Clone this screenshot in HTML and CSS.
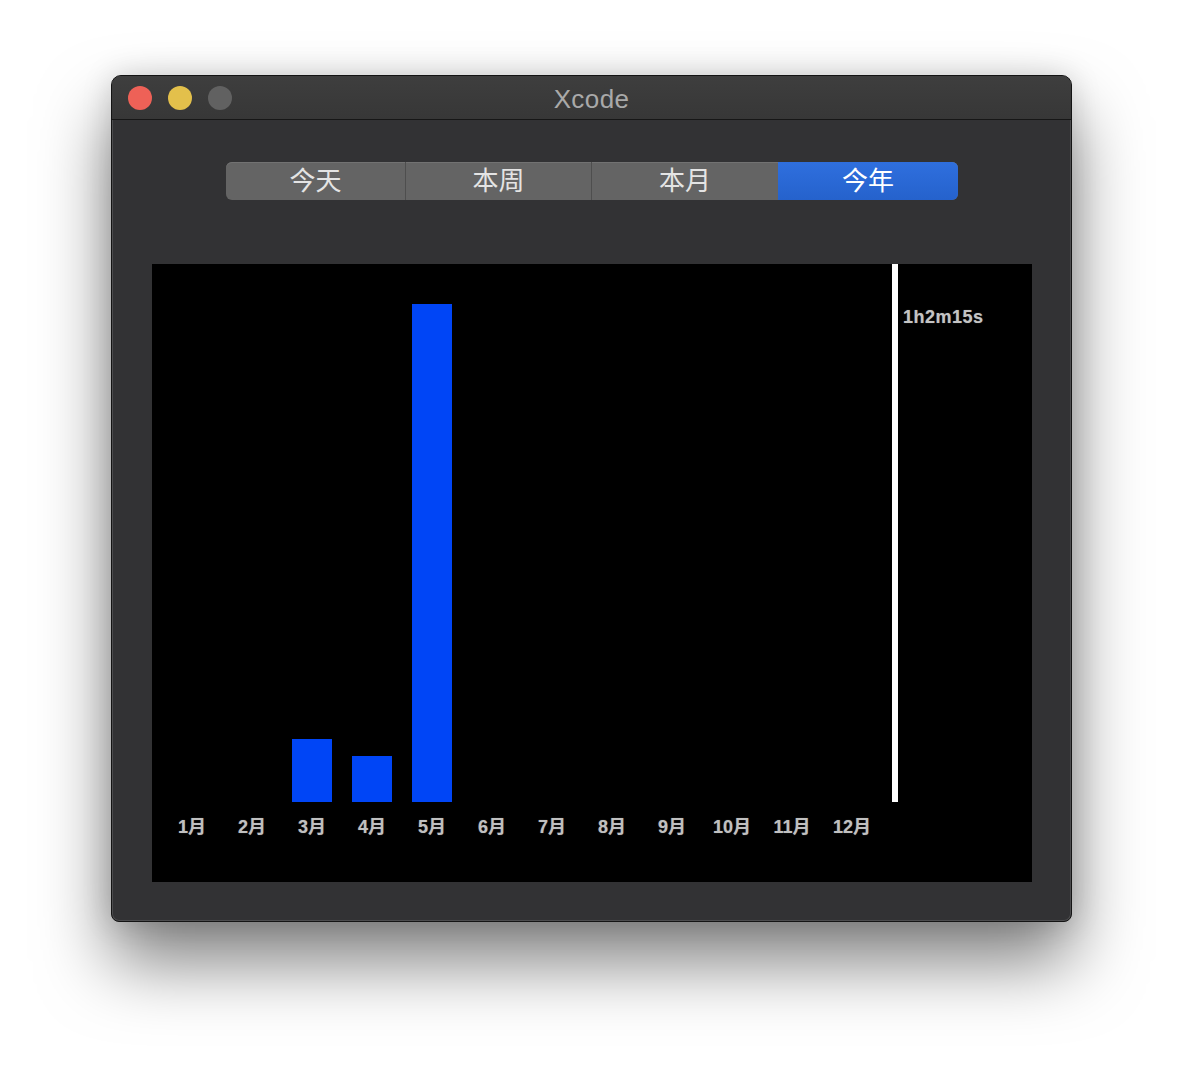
FILE: index.html
```html
<!DOCTYPE html>
<html lang="zh">
<head>
  <meta charset="UTF-8" />
  <title>Xcode</title>
  <link rel="stylesheet" href="styles.css">
</head>
<body>
  <div class="window">
    <div class="titlebar">
      <div class="lights">
        <span class="light red"></span>
        <span class="light yellow"></span>
        <span class="light gray"></span>
      </div>
      <div class="title">Xcode</div>
      <div class="spacer"></div>
    </div>

    <div class="content">
      <div class="segments">
        <button class="seg day">今天</button>
        <button class="seg week">本周</button>
        <button class="seg month-tab">本月</button>
        <button class="seg year active">今年</button>
      </div>

      <div class="chart">
        <div class="plot">
          <div class="col"></div>
          <div class="col"></div>
          <div class="col"><div class="bar" style="height: 63px"></div></div>
          <div class="col"><div class="bar" style="height: 46px"></div></div>
          <div class="col"><div class="bar" style="height: 498px"></div></div>
          <div class="col"></div>
          <div class="col"></div>
          <div class="col"></div>
          <div class="col"></div>
          <div class="col"></div>
          <div class="col"></div>
          <div class="col"></div>

          <div class="month">1月</div>
          <div class="month">2月</div>
          <div class="month">3月</div>
          <div class="month">4月</div>
          <div class="month">5月</div>
          <div class="month">6月</div>
          <div class="month">7月</div>
          <div class="month">8月</div>
          <div class="month">9月</div>
          <div class="month">10月</div>
          <div class="month">11月</div>
          <div class="month">12月</div>
        </div>
        <div class="axis"></div>
        <div class="total">1h2m15s</div>
      </div>
    </div>
  </div>
</body>
</html>
```

FILE: styles.css
```css
html, body {
  margin: 0;
  background: #ffffff;
  font-family: "Liberation Sans", "Noto Sans CJK SC", sans-serif;
  overflow: hidden;
}

body {
  padding: 75px 0 0 111px;
  height: 1070px;
  box-sizing: border-box;
}

.window {
  width: 961px;
  height: 847px;
  box-sizing: border-box;
  background: #323234;
  border: 1px solid #141414;
  border-radius: 10px 10px 8px 8px;
  box-shadow: inset 0 0 0 1px rgba(255, 255, 255, 0.13),
              0 40px 70px rgba(0, 0, 0, 0.5),
              0 0 30px rgba(0, 0, 0, 0.15);
  overflow: hidden;
}

.titlebar {
  display: flex;
  align-items: center;
  height: 43px;
  background: linear-gradient(#3e3e3e, #373737);
  border-bottom: 1px solid #161616;
}

.lights {
  display: flex;
  gap: 16px;
  padding-left: 16px;
  width: 121px;
  box-sizing: border-box;
}

.light {
  width: 24px;
  height: 24px;
  border-radius: 50%;
}

.red { background: #ee6157; }
.yellow { background: #e3c04b; }
.gray { background: #616161; }

.title {
  flex: 1;
  text-align: center;
  color: #a9a9a9;
  font-size: 26px;
  line-height: 43px;
  padding-top: 3px;
  letter-spacing: 0.4px;
}

.spacer {
  width: 121px;
}

.content {
  padding: 42px 39px 0 40px;
}

.segments {
  display: flex;
  width: 732px;
  height: 38px;
  margin: 0 auto;
  border-radius: 6px;
  overflow: hidden;
  background: #646464;
  box-shadow: inset 0 1px 0 #727272;
}

.seg {
  border: none;
  border-left: 1px solid #4e4e4e;
  background: transparent;
  color: #e4e4e4;
  font-family: "Liberation Sans", "Noto Sans CJK SC", sans-serif;
  font-size: 26px;
  line-height: 38px;
  padding: 0;
}

.day { width: 179px; border-left: none; }
.week { width: 186px; }
.month-tab { width: 187px; }
.year { width: 180px; }

.seg.active {
  border-left: none;
  background: linear-gradient(#2f6fde, #2562cc);
  color: #ffffff;
}

.chart {
  display: flex;
  align-items: flex-start;
  margin-top: 64px;
  height: 618px;
  padding-left: 10px;
  background: #000000;
}

.plot {
  display: grid;
  grid-template-columns: repeat(12, 60px);
  grid-template-rows: 538px auto;
}

.col {
  display: flex;
  align-items: flex-end;
  justify-content: center;
}

.bar {
  width: 40px;
  background: #0045f6;
}

.month {
  margin-top: 15px;
  text-align: center;
  color: #c0c0c0;
  font-size: 18px;
  font-weight: bold;
  line-height: 20px;
  text-shadow: 0 0 1px rgba(200, 200, 200, 0.5);
}

.axis {
  width: 6px;
  height: 538px;
  margin-left: 10px;
  background: #ffffff;
}

.total {
  margin: 43px 0 0 5px;
  color: #c4c4c4;
  font-size: 18px;
  font-weight: bold;
  letter-spacing: 0.5px;
  line-height: 20px;
  text-shadow: 0 0 1px rgba(200, 200, 200, 0.5);
}
```
